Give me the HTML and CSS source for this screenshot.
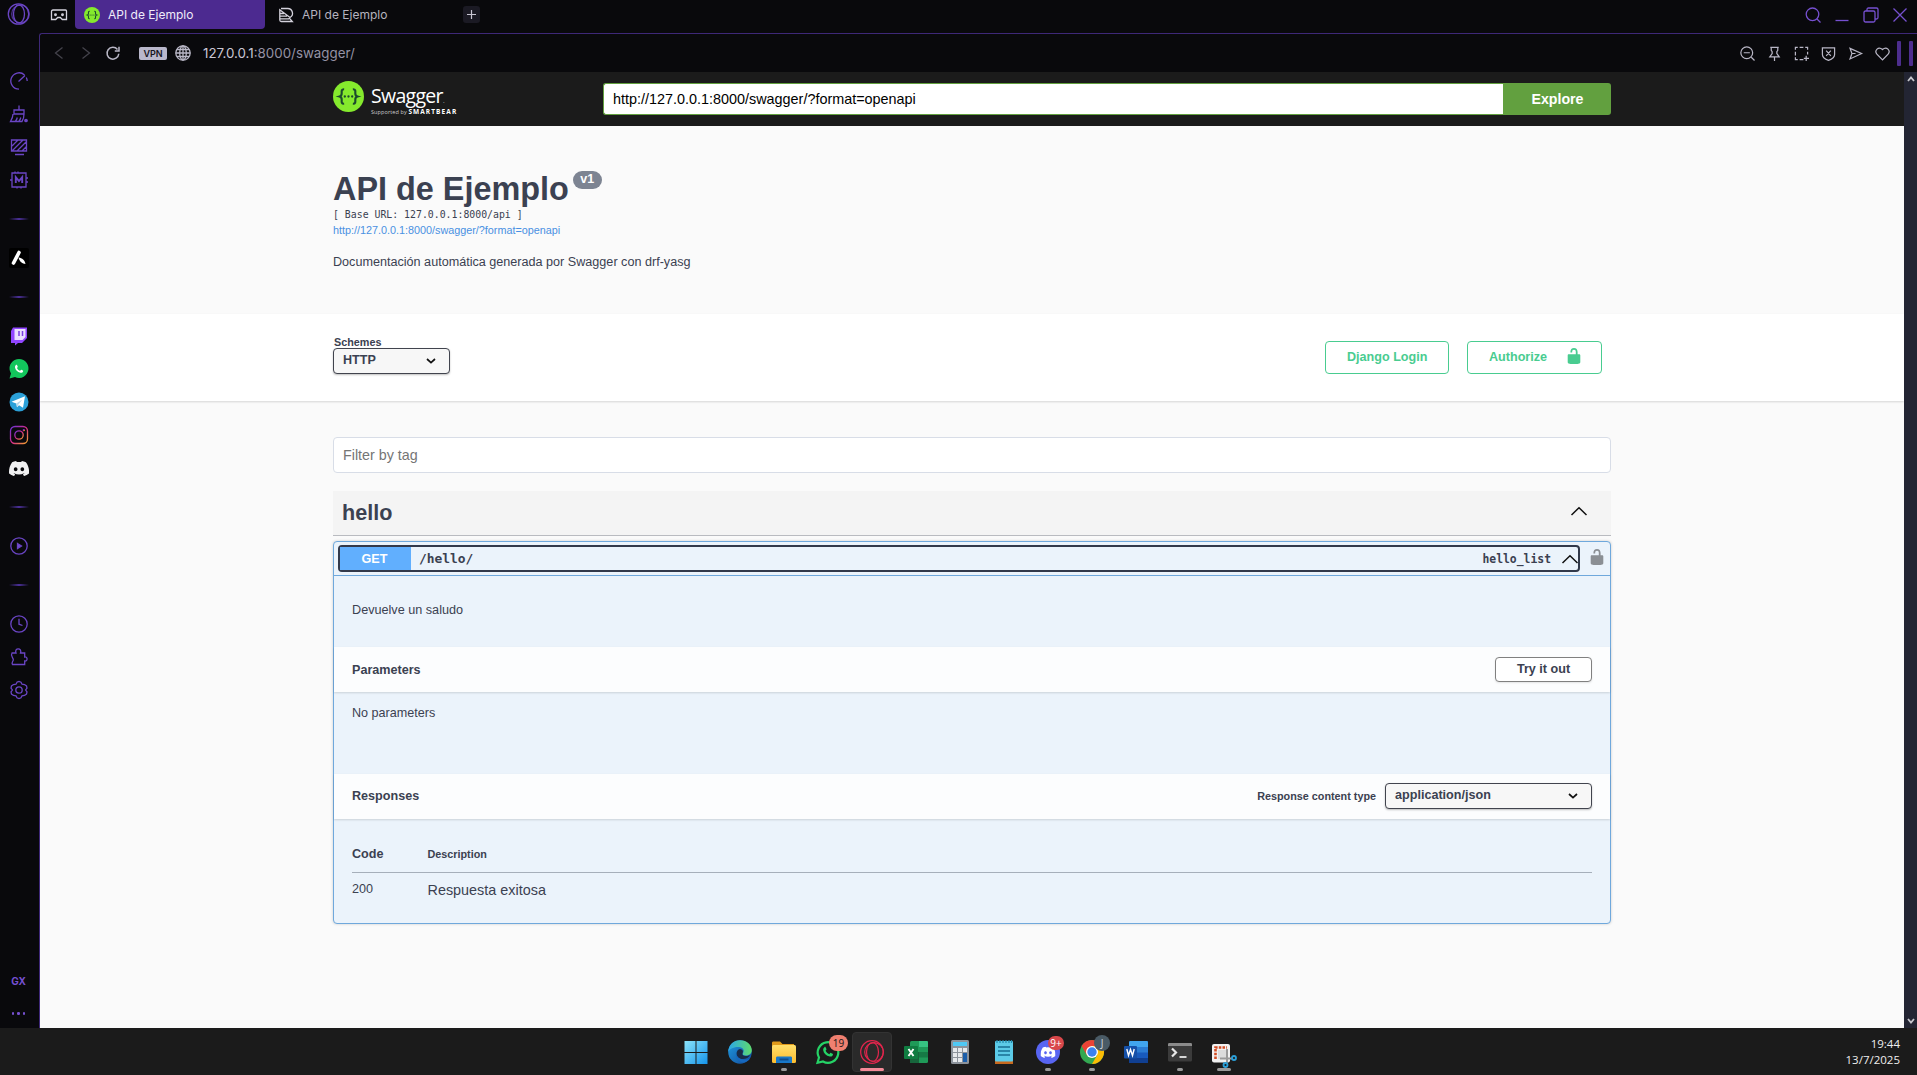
FILE: index.html
```html
<!DOCTYPE html>
<html lang="es">
<head>
<meta charset="utf-8">
<title>API de Ejemplo</title>
<link rel="stylesheet" href="styles.css">
</head>
<body>
<svg class="defs" width="0" height="0">
  <defs>
    <linearGradient id="win" x1="0" y1="0" x2="1" y2="1"><stop offset="0" stop-color="#8be4fb"/><stop offset="1" stop-color="#1593e8"/></linearGradient>
    <linearGradient id="edge" x1="0" y1="0" x2="1" y2="0"><stop offset="0" stop-color="#2aa6ea"/><stop offset="1" stop-color="#5fdc6c"/></linearGradient>
    <linearGradient id="edgeb" x1="0" y1="0" x2="1" y2="1"><stop offset="0" stop-color="#1f9ce0"/><stop offset="1" stop-color="#124a9c"/></linearGradient>
    <linearGradient id="folder" x1="0" y1="0" x2="0" y2="1"><stop offset="0" stop-color="#ffdf6b"/><stop offset="1" stop-color="#fcbc2e"/></linearGradient>
    <linearGradient id="insta" x1="0" y1="0" x2="1" y2="1"><stop offset="0" stop-color="#6a35d8"/><stop offset=".5" stop-color="#d22a8a"/><stop offset="1" stop-color="#f5a62a"/></linearGradient>
    <symbol id="discord" viewBox="0 0 24 18"><path d="M20.3 1.5A19.8 19.8 0 0 0 15.4 0l-.7 1.3a18.3 18.3 0 0 0-5.4 0L8.6 0a19.7 19.7 0 0 0-4.9 1.5C.5 6.100-.3 10.600.1 15.100a20 20 0 0 0 6 3l1.300-2.100-1.900-.9.5-.4a14.200 14.200 0 0 0 12.100 0l.5.4-1.900.9 1.300 2.100a19.900 19.900 0 0 0 6-3c.5-5.200-.8-9.700-3.700-13.600zM8 12.300c-1.200 0-2.200-1.100-2.200-2.400S6.800 7.500 8 7.500s2.200 1.100 2.200 2.400S9.200 12.300 8 12.300zm8 0c-1.200 0-2.200-1.100-2.200-2.400s1-2.400 2.200-2.400 2.200 1.100 2.200 2.400-1 2.400-2.200 2.400z" fill="currentColor"/></symbol>
    <symbol id="phone" viewBox="0 0 24 24"><path d="M7.200 5.500c.5-.6 1.300-.5 1.600.1l1.100 2.500c.1.400.1.700-.2 1l-.9 1.100c.9 2 2.600 3.700 4.900 4.700l1.300-1.500c.3-.3.600-.3.900-.2l2.300 1.200c.5.300.5.700.4 1.100-.5 1.900-2.300 2.900-4.200 2.500C9.500 17 6.200 13.600 5.600 9.600c-.2-1.700.3-3 1.600-4.100z" fill="currentColor"/></symbol>
    <symbol id="lock" viewBox="0 0 20 20"><path d="M15.800 8H14V5.600C14 2.700 12.665 1 10 1 7.334 1 6 2.700 6 5.600V6h2v-.801C8 3.754 8.797 3 10 3c1.203 0 2 .754 2 2.199V8H4c-.553 0-1 .646-1 1.199V17c0 .549.428 1.139.951 1.307l1.197.387C5.672 18.861 6.550 19 7.100 19h5.800c.549 0 1.428-.139 1.951-.307l1.196-.387c.524-.167.953-.757.953-1.306V9.199C17 8.646 16.352 8 15.800 8z" fill="currentColor"/></symbol>
    <symbol id="braces" viewBox="0 0 32 32"><circle cx="16" cy="16" r="16" fill="#85ea2d"/><path d="M11.500 8.500C8.500 8.300 8.900 10.500 9 12.500c.1 2-.5 3-2.300 3.500 1.800.5 2.400 1.500 2.300 3.500-.1 2-.5 4.200 2.500 4M20.500 8.500c3-.2 2.600 2 2.500 4-.1 2 .5 3 2.300 3.500-1.800.5-2.400 1.500-2.300 3.500.1 2 .5 4.200-2.500 4" fill="none" stroke="#1c4a2e" stroke-width="2.200"/><circle cx="12.200" cy="16" r="1.200" fill="#1c4a2e"/><circle cx="16" cy="16" r="1.200" fill="#1c4a2e"/><circle cx="19.800" cy="16" r="1.200" fill="#1c4a2e"/></symbol>
    <symbol id="up" viewBox="0 0 18 10"><path d="M1.500 9 9 1.700 16.500 9" fill="none" stroke="#111" stroke-width="1.500"/></symbol>
    <symbol id="down" viewBox="0 0 10 6"><path d="M1 1l4 3.600L9 1" fill="none" stroke="#111" stroke-width="1.700"/></symbol>
  </defs>
</svg>
<div class="desktop">
  <div class="browser">
    <aside class="sidebar">
      <div class="slot opera"><svg width="24" height="24" viewBox="0 0 24 24"><circle cx="11.500" cy="12" r="10.200"/><ellipse cx="12" cy="12" rx="5.500" ry="9"/><circle cx="13.500" cy="12" r="8.800" opacity=".7"/></svg></div>
      <div class="slot"><svg width="20" height="20" viewBox="0 0 20 20"><path d="M10 18.200a8.200 8.200 0 1 1 5.500-14.300M17.300 6.500c.5 1 .9 2.200.9 3.500M9.500 10.500l6.500-6"/></svg></div>
      <div class="slot"><svg width="20" height="20" viewBox="0 0 20 20"><path d="M10 1.500v4M5 6h10v4H5zM4 10c0 3-1 5-2.500 7.500H13c1.500-2 2-4.500 2-7.500M6.500 17c1-1 1.500-2 1.800-3.500M10 17c1-1 1.500-2 1.800-3.500"/><circle cx="17" cy="16.500" r="1.200" fill="#6a45c4"/></svg></div>
      <div class="slot"><svg width="20" height="20" viewBox="0 0 20 20"><path d="M2.500 3h15v11h-15zM3 9l6-6M3 14 14 3M8 14l9.500-9.500M13 14l4.500-4.500M6 17.500h9"/></svg></div>
      <div class="slot"><svg width="20" height="20" viewBox="0 0 20 20"><path d="M3 3h14v14H3zM6 3V1.500M9 3V1.500M17 8h2M17 12h2M1 10h2M8 17v1.500M12 17v1.500"/><path d="M6.800 13V7.200L10 11l3.200-3.800V13" stroke-width="1.900"/></svg></div>
      <div class="sep"></div>
      <div class="slot"><svg class="solid" width="20" height="20" viewBox="0 0 20 20"><rect width="20" height="20" rx="2" fill="#000"/><path d="M10 4.500 4.500 15" stroke="#fff" stroke-width="3.600" stroke-linecap="round"/><path d="M9.500 9.500c4 .5 6 2.500 7 6.500-3-.3-6-2-7-6.500z" fill="#fff"/></svg></div>
      <div class="sep"></div>
      <div class="slot"><svg class="solid" width="20" height="20" viewBox="0 0 20 20"><path d="M4 1.500h14V12l-5 5H9l-3 2.500V17H2V5z" fill="#9146ff"/><path d="M5.500 3h11v8l-3 3h-8z" fill="#eadfff"/><path d="M10 5v5M13.500 5v5" stroke="#7b3fe0" stroke-width="1.500"/></svg></div>
      <div class="slot"><svg class="solid" width="20" height="20" viewBox="0 0 20 20"><path d="M.5 19.500 2 14.500A9.500 9.500 0 1 1 6 18z" fill="#12c65c"/><use href="#phone" x="2.500" y="2.500" width="15" height="15" color="#fff"/></svg></div>
      <div class="slot"><svg class="solid" width="20" height="20" viewBox="0 0 20 20"><circle cx="10" cy="10" r="9.500" fill="#2ba0d8"/><path d="M2.500 9.800 16 4.300 14 15.700l-4-2.500-2 2-.7-3.800z" fill="#fff"/><path d="m7.300 11.400 6-4-4 5.300-1.300 2.500z" fill="#b8d8ea"/></svg></div>
      <div class="slot"><svg width="20" height="20" viewBox="0 0 20 20"><g style="stroke:url(#insta)"><rect x="1.500" y="1.500" width="17" height="17" rx="4.500"/><circle cx="10" cy="10" r="4.200"/><circle cx="14.800" cy="5.200" r=".5"/></g></svg></div>
      <div class="slot white"><svg class="solid" width="20" height="15"><use href="#discord" width="20" height="15"/></svg></div>
      <div class="sep"></div>
      <div class="slot"><svg width="20" height="20" viewBox="0 0 20 20"><circle cx="10" cy="10" r="8.200"/><path d="m8.500 7.500 4 2.500-4 2.500z" fill="#7650d0"/></svg></div>
      <div class="sep"></div>
      <div class="slot"><svg width="20" height="20" viewBox="0 0 20 20"><circle cx="10" cy="10" r="8.200"/><path d="M10 4.800v5.400l3.500 1.300"/></svg></div>
      <div class="slot"><svg width="20" height="20" viewBox="0 0 20 20"><path d="M3 6h4c-1-3 .5-4.200 2.200-4.200S12.500 3 11.500 6h4.200v4c3-.8 3.300 4.500 0 4v3.500H3.500c-1.500-2 .8-3 .8-4.800C4.300 10.500 1 9 3 6z"/></svg></div>
      <div class="slot"><svg width="20" height="20" viewBox="0 0 20 20"><circle cx="10" cy="10" r="3.200"/><path d="M8 2.200 10 1.500l2 .7 1 2 2.500.3 2 1.500.5 2L16.600 10l1.400 2-.5 2-2 1.500-2.500.3-1 2-2 .7-2-.7-1-2-2.500-.3-2-1.500L2 12l1.400-2L2 8l.5-2 2-1.500L7 4.200z"/></svg></div>
      <div class="slot gx">GX</div>
      <div class="slot dots"><i></i><i></i><i></i></div>
    </aside>
    <div class="frame">
      <header class="tabs">
        <svg class="line-icon" width="18" height="16" viewBox="0 0 18 16"><path d="M3 3h12.500c.5 0 1 .5 1 1v8.500h-4.200l-2-2H7.700l-2 2H1.500V4.500C1.500 3.500 2 3 3 3z"/><circle cx="5.500" cy="7.700" r=".8"/><circle cx="12.500" cy="7.700" r=".8"/></svg>
        <div class="tab active"><svg width="16" height="16"><use href="#braces" width="16" height="16"/></svg><span>API de Ejemplo</span></div>
        <div class="tab"><svg class="line-icon" width="16" height="16" viewBox="0 0 16 16"><path d="M3 1.500h6.500a4.800 4.800 0 0 1 2.500 9L1.800 2.800V13c0 1 .5 1.500 1.500 1.500h11L11 10.800M2 6.500h4M2 9.200h7M2 11.900h9"/></svg><span>API de Ejemplo</span></div>
        <div class="newtab"><svg width="17" height="17" viewBox="0 0 17 17"><path d="M8.500 4v9M4 8.500h9"/></svg></div>
        <div class="window-controls">
          <svg viewBox="0 0 16 16"><circle cx="7.500" cy="7.300" r="6.300"/><path d="m12 12 3.500 3.500"/></svg>
          <svg viewBox="0 0 16 16"><path d="M1.500 13.500h13"/></svg>
          <svg viewBox="0 0 16 16"><rect x="1" y="4" width="11" height="11" rx="1.500"/><path d="M4 4V2.500C4 1.500 4.500 1 5.500 1H13.500c1 0 1.500.5 1.500 1.500v8c0 1-.5 1.500-1.500 1.500H12"/></svg>
          <svg viewBox="0 0 16 16"><path d="m1.500 1.500 13 13m0-13-13 13"/></svg>
        </div>
      </header>
      <div class="viewport">
        <nav class="address-bar">
          <div class="nav-buttons">
            <svg class="dim" width="14" height="14" viewBox="0 0 14 14"><path d="M10.500 1.500 3.500 7l7 5.500"/></svg>
            <svg class="dim" width="14" height="14" viewBox="0 0 14 14"><path d="m3.500 1.500 7 5.500-7 5.500"/></svg>
            <svg class="reload" width="14" height="14" viewBox="0 0 14 14"><path d="M12.800 7.800A5.900 5.900 0 1 1 11.500 3.500M13 .8v4.200H8.800"/></svg>
          </div>
          <span class="vpn">VPN</span>
          <svg class="globe" width="16" height="16" viewBox="0 0 16 16"><circle cx="8" cy="8" r="7.200"/><ellipse cx="8" cy="8" rx="3.300" ry="7.200"/><path d="M8 .8v14.400M.8 8h14.400M2 4.500h12M2 11.500h12"/></svg>
          <span class="url">127.0.0.1<em>:8000/swagger/</em></span>
          <div class="tools">
            <svg viewBox="0 0 16 16"><circle cx="7.200" cy="7.200" r="6.300"/><path d="m12 12 3.500 3.500M4 7.200h6.500"/></svg>
            <svg viewBox="0 0 16 16"><path d="M3.500 1.500h9M4.500 1.500v3l1 1.500v2L3 11.500h10L10.500 8V6l1-1.500v-3M8 11.500V16"/></svg>
            <svg viewBox="0 0 16 16"><path d="M1.500 4V1.500H4M6 1.500h4M12 1.500h2.500V4M14.500 6v3M1.500 6v4M1.500 12v2.500H4M6 14.500h4M13 10.500V16M10.500 13.200H16"/></svg>
            <svg viewBox="0 0 16 16"><path d="M1.500 2h13v7c0 3-3 5-6.500 6.300C4.500 14 1.500 12 1.500 9zM5.500 5l5 5.500m0-5.500-5 5.500"/></svg>
            <svg viewBox="0 0 16 16"><path d="M2.200 2.500 14.500 8 2.200 13.800l2-5.800zM4.500 8h3.500"/></svg>
            <svg viewBox="0 0 16 16"><path d="M8 14.800 2 8.700c-3-3.500 1.500-9 6-4.900 4.500-4.100 9 1.400 6 4.900z"/></svg>
          </div>
          <div class="bars"><i></i><i></i></div>
        </nav>
        <div class="scroller">
          <main class="page">
            <div class="topbar">
              <div class="logo">
                <svg width="31" height="31"><use href="#braces" width="31" height="31"/></svg>
                <div class="wordmark"><b>Swagger<small>.</small></b><span>Supported by <strong>SMARTBEAR</strong></span></div>
              </div>
              <div class="spec-url">http://127.0.0.1:8000/swagger/?format=openapi</div>
              <div class="explore">Explore</div>
            </div>
            <section class="info">
              <h1>API de Ejemplo<span class="version">v1</span></h1>
              <div class="base-url">[ Base URL: 127.0.0.1:8000/api ]</div>
              <a class="spec-link">http://127.0.0.1:8000/swagger/?format=openapi</a>
              <p>Documentación automática generada por Swagger con drf-yasg</p>
            </section>
            <section class="schemes">
              <div class="scheme-picker"><label>Schemes</label><div class="select"><span>HTTP</span><svg width="10" height="6"><use href="#down"/></svg></div></div>
              <div class="auth">
                <div class="btn login">Django Login</div>
                <div class="btn authorize">Authorize<svg width="18" height="18"><use href="#lock"/></svg></div>
              </div>
            </section>
            <div class="filter">Filter by tag</div>
            <section class="tag"><h2>hello</h2><svg width="18" height="10"><use href="#up"/></svg></section>
            <section class="opblock">
              <div class="summary">
                <div class="control"><span class="method">GET</span><span class="path">/hello/</span><span class="op-id">hello_list</span><svg width="18" height="10"><use href="#up"/></svg></div>
                <svg class="lock" width="18" height="18"><use href="#lock"/></svg>
              </div>
              <p class="op-desc">Devuelve un saludo</p>
              <div class="section-head"><h4>Parameters</h4><div class="try">Try it out</div></div>
              <p class="no-params">No parameters</p>
              <div class="section-head types"><h4>Responses</h4><label>Response content type</label><div class="select wide"><span>application/json</span><svg width="10" height="6"><use href="#down"/></svg></div></div>
              <div class="responses">
                <div class="row head"><span>Code</span><small>Description</small></div>
                <div class="row"><span>200</span><em>Respuesta exitosa</em></div>
              </div>
            </section>
          </main>
          <div class="scrollbar">
            <svg width="8" height="6" viewBox="0 0 8 6"><path d="M1 5l3-3.500L7 5"/></svg>
            <svg width="8" height="6" viewBox="0 0 8 6"><path d="M1 1l3 3.500L7 1"/></svg>
          </div>
        </div>
      </div>
    </div>
  </div>
  <footer class="taskbar">
    <div class="apps">
      <div class="app"><svg viewBox="0 0 24 24"><path d="M.5 1H11.500V12H.5zM12.500 1H23.500V12H12.500zM.5 13H11.500V24H.5zM12.500 13H23.500V24H12.500z" fill="url(#win)"/></svg></div>
      <div class="app"><svg viewBox="0 0 24 24"><circle cx="12" cy="12" r="11.800" fill="url(#edgeb)"/><path d="M.2 12C.5 4.500 6 .2 12 .2c7 0 11.800 5 11.800 9.800 0 4-3 5.500-6 5.500-2.500 0-3.500-1-3-2 .6-1 .9-1.700.9-2.700C15.700 8.500 13 7 10 7 5 7 1 9.500.2 12z" fill="url(#edge)"/><path d="M8.500 14c0-3 1.500-4.500 3.500-5 2.500.3 3.500 2 2.700 4-1 1.500.4 3 3.200 3 2.500 0 4-.7 4.600-1.300C21 17.500 18 19 15 19c-4 0-6.500-2-6.500-5z" fill="#1a2c48"/><path d="M8 13c-.8 5 3 9 8 9.500 2.500-.5 4.500-2 6-4-6 3-13 .5-14-5.500z" fill="#1668bf"/></svg></div>
      <div class="app"><svg viewBox="0 0 24 24"><path d="M0 3c0-1 .5-1.500 1.500-1.500H8L10.500 4H22v5H0z" fill="#e09a1a"/><rect y="5" width="24" height="18" rx="1.500" fill="url(#folder)"/><path d="M4 23v-5c0-1 .6-1.500 1.500-1.500h13c1 0 1.500.5 1.500 1.500v5z" fill="#1878c8"/><path d="M7.500 18.500h9v2h-9z" fill="#0f4d8c"/></svg><i class="dot"></i></div>
      <div class="app"><svg viewBox="0 0 24 24"><path d="M1.500 22.800 3 17.500A10.300 10.300 0 1 1 7 21.500z" fill="none" stroke="#25d366" stroke-width="2.200"/><use href="#phone" x="3" y="3" width="18" height="18" color="#25d366"/></svg><span class="badge coral">19</span></div>
      <div class="app current"><svg viewBox="0 0 24 24" fill="none" stroke="#e2264d" stroke-width="1.200"><circle cx="12" cy="12" r="11.300"/><ellipse cx="12.500" cy="12" rx="6" ry="9.500"/><circle cx="14" cy="12" r="9.300"/></svg><i class="dot red"></i></div>
      <div class="app"><svg viewBox="0 0 24 24"><rect x="6" y="1" width="18" height="22" rx="1.500" fill="#1f9a58"/><path d="M15 1h7.500c1 0 1.500.5 1.500 1.500V7h-9z" fill="#36c481"/><path d="M6 12h9v11H7.500C6.500 23 6 22.500 6 21.500z" fill="#17653c"/><path d="M15 12h9v5.500h-9z" fill="#167a45"/><rect y="6" width="14" height="13" rx="1" fill="#107c41"/><path d="m4.500 9 5 7m0-7-5 7" stroke="#fff" stroke-width="1.900"/></svg></div>
      <div class="app"><svg viewBox="0 0 24 24"><rect x="3" y="0" width="18" height="24" rx="1.500" fill="#8c939b"/><rect x="5" y="2" width="14" height="4" fill="#4fc8f4"/><path d="M5 8h4v4H5zM10 8h4v4h-4zM15 8h4v4h-4zM5 13h4v4H5zM10 13h4v4h-4zM5 18h4v4H5zM10 18h4v4h-4z" fill="#e6e9ec"/><path d="M15 13h4v9h-4z" fill="#1b5eaa"/></svg></div>
      <div class="app"><svg viewBox="0 0 24 24"><path d="M3 21h18v3H3z" fill="#c8691d"/><rect x="3" y="1" width="18" height="20.500" rx="1" fill="#5ccbe8"/><path d="M6 7h12M6 11h12M6 15h12" stroke="#176f93" stroke-width="1.400"/><path d="M5 0v3M8 0v3M11 0v3M14 0v3M17 0v3M19.500 0v3" stroke="#2288aa" stroke-width="1.200"/></svg></div>
      <div class="app"><svg viewBox="0 0 24 24"><circle cx="12" cy="12" r="12" fill="#5865f2"/><use href="#discord" x="4.500" y="6.500" width="15" height="11.500" color="#fff"/></svg><span class="badge crimson">9+</span><i class="dot"></i></div>
      <div class="app"><svg viewBox="0 0 24 24"><circle cx="12" cy="12" r="12" fill="#33a852"/><path d="M1.600 6A12 12 0 0 1 22.400 6H12L6.800 15z" fill="#ea4335"/><path d="M22.400 6A12 12 0 0 1 12 24l5.200-9L12 6z" fill="#fbbc05"/><circle cx="12" cy="12" r="6" fill="#fff"/><circle cx="12" cy="12" r="4.700" fill="#3b82f0"/></svg><span class="badge slate">J</span><i class="dot"></i></div>
      <div class="app"><svg viewBox="0 0 24 24"><rect x="5" y="1" width="19" height="22" rx="1.500" fill="#185abd"/><path d="M5 7V2.500C5 1.500 5.500 1 6.500 1h16c1 0 1.500.5 1.500 1.500V7z" fill="#41a5ee"/><path d="M5 7h19v5.500H5z" fill="#2b7cd3"/><path d="M5 18h19v3.500c0 1-.5 1.500-1.500 1.500h-16C5.500 23 5 22.500 5 21.500z" fill="#103f91"/><rect y="6" width="13" height="12.500" rx="1" fill="#1550a8"/><path d="m2.800 9 1.700 6.500L6.500 9.500l2 6L10.200 9" fill="none" stroke="#fff" stroke-width="1.400"/></svg></div>
      <div class="app"><svg viewBox="0 0 24 24"><rect y="3" width="24" height="18.500" rx="1.500" fill="#3b3b3b"/><path d="M0 6V4.500C0 3.500.5 3 1.500 3h21c1 0 1.500.5 1.500 1.500V6z" fill="#8b8b8b"/><path d="m4 8.500 4 4-4 4" fill="none" stroke="#e8e8e8" stroke-width="2.200"/><path d="M11.500 17h7" stroke="#e8e8e8" stroke-width="1.800"/></svg><i class="dot"></i></div>
      <div class="app"><svg viewBox="0 0 24 24"><rect x="0" y="4" width="18" height="18.500" rx="2" fill="#f1f1f1"/><path d="M3.500 19V7.500H15" fill="none" stroke="#d24b22" stroke-width="2.600" stroke-dasharray="2.500 1.200"/><rect x="6" y="10" width="9" height="9" fill="#dcdcdc"/><path d="M15 9v13M8 18.500h13" stroke="#9a9a9a" stroke-width="2"/><g fill="none" stroke="#2a9fd8" stroke-width="1.800"><circle cx="22" cy="18" r="2"/><circle cx="13.500" cy="25" r="2"/></g></svg><i class="dot wide-dot"></i></div>
    </div>
    <div class="clock"><span>19:44</span><span>13/7/2025</span></div>
  </footer>
</div>
</body>
</html>
```
FILE: styles.css
```css
* { box-sizing: border-box; }
body { margin: 0; background: #09090c; font-family: "Liberation Sans", Arial, sans-serif; color: #3b4151; overflow: hidden; }
h1, h2, h4, p { margin: 0; }
em { font-style: normal; }
svg { display: block; flex: none; overflow: visible; }
.defs { position: absolute; }
.desktop { display: flex; flex-direction: column; width: 1917px; height: 1075px; }
.browser { display: flex; height: 1028px; flex: none; background: #09090c; }

/* side panel */
.sidebar { width: 39px; flex: none; display: flex; flex-direction: column; height: 1030px; padding-right: 1px; }
.slot { height: 33px; flex: none; display: flex; align-items: center; justify-content: center; }
.slot svg { fill: none; stroke: #6a45c4; stroke-width: 1.3; }
.slot svg.solid { stroke: none; }
.slot.opera { height: 28px; margin-bottom: 36.500px; }
.slot.white { color: #f0f0f2; }
.sep { height: 45px; flex: none; display: flex; align-items: center; justify-content: center; }
.sep::before { content: ""; width: 20px; height: 2px; background: linear-gradient(90deg, transparent, #4b309a, transparent); }
.gx { margin-top: auto; color: #7650d0; font: 700 10px Inter, sans-serif; padding-right: 1px; }
.dots { gap: 3px; padding-right: 1px; }
.dots i { width: 2.500px; height: 2.500px; border-radius: 50%; background: #7650d0; }

/* tabs */
.frame { flex: 1; min-width: 0; display: flex; flex-direction: column; }
.tabs { height: 33px; display: flex; align-items: flex-start; padding-left: 11px; font: 12px Inter, sans-serif; color: #b5b3bf; }
.line-icon { fill: none; stroke: #d4d2dc; stroke-width: 1.300; }
.tabs > .line-icon { margin: 7px 7px 0 0; }
.tab { display: flex; align-items: center; gap: 8px; width: 190px; height: 29px; padding-left: 9px; border-radius: 0 0 4px 4px; }
.tab.active { background: #4c2a90; color: #f0ecfa; padding-left: 9px; }
.tab:not(.active) { padding-left: 13px; width: 198px; }
.newtab { width: 17px; height: 17px; margin-top: 6px; background: #1b1a24; border-radius: 3px; }
.newtab svg { fill: none; stroke: #c8c6d2; stroke-width: 1.200; }
.window-controls { margin-left: auto; display: flex; gap: 13px; padding: 7px 9px 0 0; }
.window-controls svg { width: 16px; height: 16px; fill: none; stroke: #7650d0; stroke-width: 1.300; }
.viewport { flex: 1; display: flex; flex-direction: column; border-top: 1px solid #3e2878; border-left: 1px solid #3e2878; border-top-left-radius: 3px; }

/* address bar */
.address-bar { height: 38px; flex: none; display: flex; align-items: center; font-family: Inter, sans-serif; }
.address-bar svg { fill: none; stroke: #b9b7c6; stroke-width: 1.300; }
.nav-buttons { display: flex; gap: 13px; padding-left: 12px; }
.nav-buttons svg.dim { stroke: #44434c; }
.nav-buttons svg.reload { stroke-width: 1.500; }
.vpn { width: 28px; height: 13px; margin-left: 19px; border-radius: 2px; background: #b9b7cb; color: #15141c; font-size: 9px; font-weight: 600; line-height: 13px; text-align: center; }
.globe { margin-left: 8px; }
.url { margin-left: 12px; font-size: 13.350px; line-height: 18px; color: #c9c7d4; }
.url em { color: #9492a4; }
.tools { margin-left: auto; display: flex; gap: 12px; }
.tools svg { width: 15px; height: 15px; }
.bars { display: flex; gap: 8px; margin: 0 4px 0 7px; }
.bars i { width: 4px; height: 25px; border-radius: 1px; background: #4d2e8e; }

/* page */
.scroller { flex: 1; display: flex; min-height: 0; }
.page { flex: 1; background: #fafafa; overflow: hidden; }
.scrollbar { width: 13px; background: #232533; display: flex; flex-direction: column; justify-content: space-between; align-items: center; padding: 4px 0; }
.scrollbar svg { fill: none; stroke: #c6c6cc; stroke-width: 1.800; }
.topbar { height: 54px; background: #1b1b1b; display: flex; align-items: center; padding: 0 293px; }
.logo { display: flex; gap: 7px; width: 270px; height: 36px; }
.wordmark { display: flex; flex-direction: column; color: #fff; font-family: "Open Sans", sans-serif; white-space: nowrap; }
.wordmark b { font-weight: 400; font-size: 19.500px; line-height: 24px; height: 27px; letter-spacing: -.7px; padding-top: 3px; }
.wordmark small { font-size: 8px; color: #999; }
.wordmark span { font-size: 5.500px; line-height: 8px; color: #ccc; letter-spacing: .1px; }
.wordmark strong { font-size: 6.500px; letter-spacing: 1.100px; color: #fff; }
.spec-url { width: 900px; height: 32px; background: #fff; border: 1px solid #62a03f; border-right: 0; border-radius: 3px 0 0 3px; padding-left: 9px; font-size: 14.400px; line-height: 30px; color: #000; }
.explore { width: 108px; height: 32px; background: #62a03f; border-radius: 0 3px 3px 0; color: #fff; font-weight: 700; font-size: 14.200px; line-height: 32px; text-align: center; padding-left: 1px; }
.info { height: 188px; padding: 45px 293px 0; }
.info h1 { display: flex; align-items: flex-start; font-size: 32.400px; line-height: 37px; white-space: nowrap; }
.version { width: 29px; height: 18px; margin-left: 4px; border-radius: 9px; background: #7d8492; color: #fff; font-size: 12.500px; line-height: 17px; text-align: center; }
.base-url { font: 9.850px/13px "DejaVu Sans Mono", monospace; }
.spec-link { display: block; font-size: 10.800px; line-height: 13px; margin-top: 3px; color: #4990e2; }
.info p { margin-top: 18px; font-size: 12.620px; line-height: 15px; }
.schemes { height: 87px; background: #fff; box-shadow: 0 1px 2px rgba(0,0,0,.15); padding: 22px 302px 0 293px; display: flex; justify-content: space-between; }
.scheme-picker label { display: block; font-size: 10.800px; font-weight: 700; line-height: 12px; padding-left: 1px; }
.select { width: 117px; height: 26px; display: flex; align-items: center; justify-content: space-between; padding: 0 13px 2px 9px; border: 1px solid #41444e; border-radius: 4px; background: #f7f7f7; box-shadow: 0 1px 2px rgba(0,0,0,.25); font-size: 12.600px; font-weight: 700; }
.select svg { margin-top: 2px; }
.auth { display: flex; gap: 18px; padding-top: 5px; }
.btn { height: 33px; display: flex; padding-left: 21px; line-height: 31px; border: 1px solid #49cc90; border-radius: 4px; color: #49cc90; font-size: 12.600px; font-weight: 700; }
.login { width: 124px; }
.authorize { width: 135px; }
.authorize svg { margin: 5px 0 0 18px; }
.filter { height: 36px; margin: 36px 293px 18px; padding-left: 9px; border: 1px solid #d8dde7; border-radius: 4px; background: #fff; font-size: 14.300px; line-height: 34px; color: #757575; }
.tag { height: 45px; margin: 0 293px; display: flex; align-items: center; justify-content: space-between; padding: 0 23px 0 9px; background: #f4f4f4; border-bottom: 1px solid #b9bbc0; }
.tag h2 { font-size: 21.600px; line-height: 24px; }
.tag svg { margin-bottom: 4px; }
.opblock { height: 383px; margin: 5px 293px 0; border: 1px solid #6fa8dc; border-radius: 4px; background: #ebf3fb; box-shadow: 0 0 3px rgba(0,0,0,.19); }
.summary { height: 34px; display: flex; align-items: center; padding-left: 4px; border-bottom: 1px solid #6fa8dc; }
.control { width: 1242px; height: 27px; display: flex; align-items: center; border: 2px solid #32394a; border-radius: 4px; }
.method { width: 71px; height: 23px; background: #61affe; color: #fff; font-size: 12.600px; font-weight: 700; line-height: 24px; text-align: center; padding-right: 2px; }
.path { margin-left: 8px; font: 700 12.900px "DejaVu Sans Mono", monospace; }
.op-id { margin-left: auto; margin-right: 10px; font: 700 11.400px "DejaVu Sans Mono", monospace; }
.control svg { margin-right: -1px; }
.summary .lock { margin-left: 8px; margin-bottom: 4px; color: #8b8f94; }
.op-desc { height: 71px; padding: 27px 18px 0; font-size: 12.650px; line-height: 15px; }
.section-head { height: 45px; display: flex; align-items: center; padding: 0 18px; background: #fcfdfe; box-shadow: 0 1px 2px rgba(0,0,0,.14); }
.section-head h4 { flex: 1; font-size: 12.600px; }
.section-head label { font-size: 10.800px; font-weight: 700; margin-right: 9px; }
.types { padding-bottom: 1px; }
.try { width: 97px; height: 25px; border: 1px solid #808080; border-radius: 4px; background: #fff; box-shadow: 0 1px 2px rgba(0,0,0,.1); font-size: 12.600px; font-weight: 700; line-height: 22px; text-align: center; }
.wide { width: 207px; }
.no-params { height: 82px; padding: 14px 18px 0; font-size: 12.600px; line-height: 15px; }
.responses { padding: 18px 18px 0; font-size: 12.600px; }
.row { display: flex; align-items: flex-start; padding-top: 8px; line-height: 16px; }
.row > span { width: 75.500px; }
.row.head { height: 36px; align-items: center; padding: 0 0 1px; font-weight: 700; border-bottom: 1px solid #a6afba; }
.row small { font-size: 10.800px; }
.row em { font-size: 14.400px; padding-top: 1px; }

/* taskbar */
.taskbar { height: 47px; flex: none; position: relative; display: flex; justify-content: flex-end; background: #1b1b1b; }
.apps { display: flex; margin-right: 531px; padding-top: 4px; }
.app { position: relative; width: 44px; height: 40px; display: flex; align-items: center; justify-content: center; }
.app svg { width: 24px; height: 24px; }
.current::before { content: ""; position: absolute; left: 2px; right: 2px; top: 0; bottom: 0; background: #2a2a2a; border: 1px solid #333; border-radius: 4px; }
.current svg { position: relative; }
.dot { position: absolute; bottom: 1px; left: 19px; width: 6px; height: 3px; border-radius: 2px; background: #9a9a9a; }
.dot.red { left: 10px; width: 24px; background: #f48a98; }
.wide-dot { left: 15px; width: 14px; }
.badge { position: absolute; right: -1px; top: 3px; height: 16px; min-width: 16px; border-radius: 8px; font: 10px/16px "Open Sans", sans-serif; text-align: center; }
.coral { background: #f08070; color: #161616; width: 19px; right: 2px; top: 3px; }
.crimson { background: #d9484b; color: #fff; top: 4px; height: 14px; line-height: 14px; right: 6px; }
.slate { background: #4a5b66; color: #d5dde2; right: 4px; }
.clock { width: 140px; padding: 8px 17px 0 0; display: flex; flex-direction: column; text-align: right; font: 11.500px/16px "Open Sans", sans-serif; color: #eee; }
```
